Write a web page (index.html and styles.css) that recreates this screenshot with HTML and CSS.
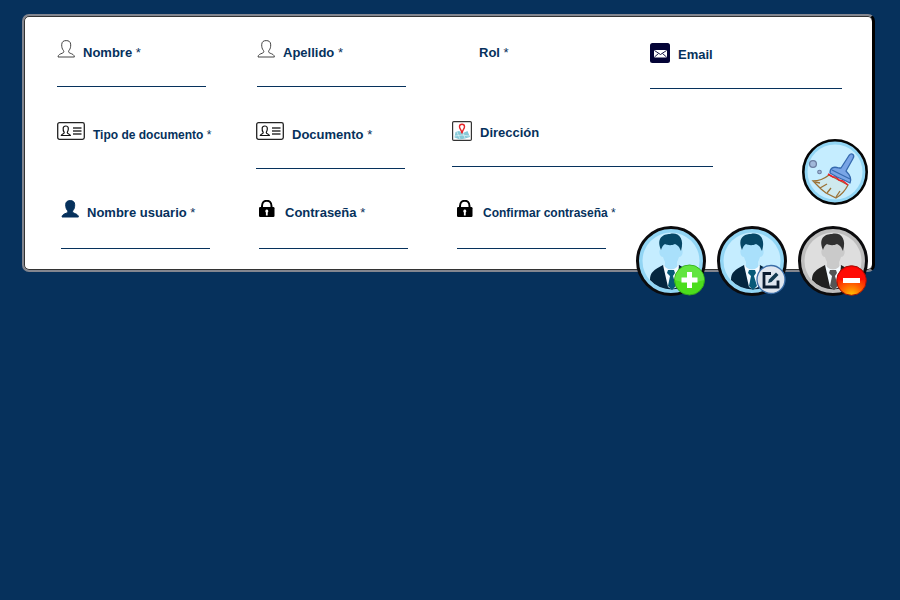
FILE: index.html
```html
<!DOCTYPE html>
<html lang="es">
<head>
<meta charset="utf-8">
<meta name="viewport" content="width=device-width, initial-scale=1">
<title>Usuarios</title>
<link rel="stylesheet" href="styles.css">
</head>
<body>
<svg class="defs" aria-hidden="true">
  <defs>
    <symbol id="person" viewBox="0 0 18 18">
      <path d="M1 17C1.200 14.500 3.300 14 5.300 13.200C6.900 12.600 7.200 11.600 6.400 10.400C5 8.900 4.700 6.800 4.700 4.800C4.700 1.600 6.700 .6 9.200 .6S13.700 1.600 13.700 4.800C13.700 6.800 13.400 8.900 12 10.400C11.200 11.600 11.500 12.600 13.100 13.200C15.100 14 17.200 14.500 17.400 17Z"/>
    </symbol>
    <symbol id="idcard" viewBox="0 0 28 18">
      <rect x=".7" y=".7" width="26.600" height="16.600" rx="1.800" fill="#fff" stroke="#222" stroke-width="1.300"/>
      <path d="M4.300 13.500C4.500 11.800 7.600 12.200 7.200 10.300C6.200 9 6 7.500 6.200 6C6.500 3.300 11 3.300 11.300 6C11.500 7.500 11.200 9 10.300 10.300C9.900 12.200 13.200 11.800 13.400 13.500Z" fill="none" stroke="#111" stroke-width="1.200"/>
      <path d="M16 6H24.500M16 9H24.500M16 12H24.500" stroke="#333" stroke-width="1.300"/>
    </symbol>
    <symbol id="lock" viewBox="0 0 18 18">
      <path d="M3 9V6C3 -1 12.500 -1 12.500 6V9" fill="none" stroke="#000" stroke-width="2"/>
      <rect x="0" y="7" width="15.500" height="10" rx="1.200" fill="#000"/>
      <path d="M7.800 9.500A1.700 1.700 0 0 1 8.700 12.500V15.500H6.900V12.500A1.700 1.700 0 0 1 7.800 9.500Z" fill="#fff"/>
    </symbol>
    <symbol id="bust" viewBox="0 0 70 70">
      <circle cx="35" cy="35" r="33.500" fill="var(--rim)" stroke="#0b0b0d" stroke-width="3"/>
      <circle cx="35" cy="35" r="28.500" fill="var(--face-bg)"/>
      <path d="M14 54C14 46 18 44 27 39L35 50L43 39C52 44 56 46 57 54A29 29 0 0 1 14 54Z" fill="var(--suit)"/>
      <path d="M27 39L31 42H39L43 39L41 61Q36 64 32 61Z" fill="#f4fbff"/>
      <path d="M32 44H38L39 47L37 50L40 60L36 64L32 60L34 50L31 47Z" fill="var(--tie)"/>
      <path d="M29 32H41V41Q35 46 29 41Z" fill="var(--skin)"/>
      <path d="M26 17H44V23Q48 23 46 29Q45 31 43 31Q41 39 35 39Q29 39 27 31Q25 31 24 29Q22 23 26 23Z" fill="var(--skin)"/>
      <path d="M25 24C20 12 27 8 34 8C42 6 49 12 45 25L43 21C42 20 41 19 39 18C35 20 31 19 29 18C27 19 26 21 25 24Z" fill="var(--hair)"/>
    </symbol>
  </defs>
</svg>

<main class="page">
  <form class="card">
    <div class="row row-personal">
      <div class="field">
        <label class="head" for="nombre"><svg class="icon outline"><use href="#person"/></svg><span>Nombre <i>*</i></span></label>
        <input class="line" id="nombre" type="text">
      </div>
      <div class="field">
        <label class="head" for="apellido"><svg class="icon outline"><use href="#person"/></svg><span>Apellido <i>*</i></span></label>
        <input class="line" id="apellido" type="text">
      </div>
      <div class="field">
        <label class="head no-icon" for="rol"><span>Rol <i>*</i></span></label>
        <select class="plain" id="rol"></select>
      </div>
      <div class="field low wide">
        <label class="head" for="email"><svg class="icon square" viewBox="0 0 20 20"><rect width="20" height="20" rx="2.500" fill="#030336"/><rect x="4" y="7" width="13" height="7.500" rx="1" fill="#fff"/><path d="M4.500 7.500L10.500 11.500L16.500 7.500M4.500 14L8.500 10.500M16.500 14L12.500 10.500" fill="none" stroke="#030336" stroke-width=".9"/></svg><span>Email</span></label>
        <input class="line" id="email" type="email">
      </div>
    </div>

    <div class="row row-address">
      <div class="field low">
        <label class="head small" for="tipo"><svg class="icon id"><use href="#idcard"/></svg><span>Tipo de documento <i>*</i></span></label>
        <select class="plain" id="tipo"></select>
      </div>
      <div class="field low">
        <label class="head" for="documento"><svg class="icon id"><use href="#idcard"/></svg><span>Documento <i>*</i></span></label>
        <input class="line" id="documento" type="text">
      </div>
      <div class="field wide">
        <label class="head" for="direccion"><svg class="icon square" viewBox="0 0 20 20"><rect x=".6" y=".6" width="18.800" height="18.800" rx="1.200" fill="#fff" stroke="#333" stroke-width="1.200"/><path d="M3.500 11L7 10L11 12L15.500 10L18 16L13 17.500L8 18.500L2.500 16.500Z" fill="#86c9d8"/><path d="M5 11L8 18M11 12L13 17M3 15L10 14L17 15" fill="none" stroke="#d7eff3" stroke-width=".8"/><path d="M10 12.500C9.700 9 7.500 8 7.500 5.700A2.500 2.500 0 0 1 12.500 5.700C12.500 8 10.300 9 10 12.500Z" fill="#fff" stroke="#e5262b" stroke-width="1.400"/></svg><span>Dirección</span></label>
        <input class="line" id="direccion" type="text">
      </div>
    </div>

    <div class="row row-account">
      <div class="field">
        <label class="head" for="usuario"><svg class="icon solid"><use href="#person"/></svg><span>Nombre usuario <i>*</i></span></label>
        <input class="line" id="usuario" type="text">
      </div>
      <div class="field">
        <label class="head" for="clave"><svg class="icon"><use href="#lock"/></svg><span>Contraseña <i>*</i></span></label>
        <input class="line" id="clave" type="password">
      </div>
      <div class="field">
        <label class="head small" for="clave2"><svg class="icon"><use href="#lock"/></svg><span>Confirmar contraseña <i>*</i></span></label>
        <input class="line" id="clave2" type="password">
      </div>
    </div>

    <div class="actions">
      <button class="round clear" type="reset" aria-label="Limpiar">
        <svg viewBox="0 0 66 66">
          <circle cx="33" cy="33" r="31.700" fill="#91d5f4" stroke="#050505" stroke-width="2.600"/>
          <circle cx="33" cy="33" r="27.500" fill="#c5edff"/>
          <path d="M27 36C22 40 17 42 11 42L17 48L19 50L24 54L34 59C41 55 44 50 46 46Z" fill="#cfe9ee" stroke="#9b7136" stroke-width="1.300"/>
          <path d="M18 49L25 45M25 54L29 49M34 58L38 52M13 43L18 44" fill="none" stroke="#9b7136" stroke-width="1.300"/>
          <path d="M26 35L31 38L34 38L37 41L41 42L46 46" fill="none" stroke="#ef1c2b" stroke-width="1.500"/>
          <path d="M28 34C28 29 31 27 37 29L39 29L47 16.500Q49 14 51 15.500Q52.500 17 51 19.500L44 32C48 36 50 40 48 44L42 41L35 38Z" fill="#79a5e6" stroke="#3569ae" stroke-width="1.300" stroke-linejoin="round"/>
          <path d="M30 31L48 40" stroke="#3569ae" stroke-width="1.100"/>
          <circle cx="11" cy="25" r="3.400" fill="#a1b8d9" stroke="#6b7da0" stroke-width="1.300"/>
          <circle cx="17.500" cy="33" r="1.800" fill="#a1b8d9" stroke="#6b7da0" stroke-width="1.100"/>
        </svg>
      </button>
      <div class="user-actions">
        <button class="round blue" type="button" aria-label="Agregar usuario">
          <svg viewBox="0 0 70 70"><use href="#bust"/><circle cx="53.500" cy="54" r="15" fill="#4cdd1c" stroke="#31a91b" stroke-width="1"/><path d="M39 54A14.500 14.500 0 0 1 68 54Q53 59 39 54Z" fill="#62e53f"/><path d="M51 46H56V51.500H61.500V56.500H56V62H51V56.500H45.500V51.500H51Z" fill="#fff"/></svg>
        </button>
        <button class="round blue" type="button" aria-label="Editar usuario">
          <svg viewBox="0 0 70 70"><use href="#bust"/><circle cx="54" cy="53.500" r="14" fill="#dfe6ef" stroke="#3b6ea8" stroke-width="1.300"/><path d="M54 47.500H47V61H61V54.500" fill="none" stroke="#0b1c30" stroke-width="2.800"/><path d="M51 57L52 53.500L59 46.500L61.500 49L54.500 56Z" fill="#123a50"/></svg>
        </button>
        <button class="round gray" type="button" aria-label="Eliminar usuario">
          <svg viewBox="0 0 70 70"><defs><radialGradient id="fire" cx=".5" cy="1" r=".8"><stop offset="0" stop-color="#ffc400"/><stop offset=".45" stop-color="#ff6500"/><stop offset="1" stop-color="#fa0000"/></radialGradient></defs><use href="#bust"/><circle cx="53.500" cy="54.500" r="14.800" fill="url(#fire)" stroke="#9e1208" stroke-width="1"/><path d="M39.500 53A14.200 14.200 0 0 1 67.500 53Q53 59 39.500 53Z" fill="#ff0b05"/><rect x="45" y="52" width="17" height="5" fill="#fff"/></svg>
        </button>
      </div>
    </div>
  </form>
</main>
</body>
</html>
```
FILE: styles.css
```css
* {
  box-sizing: border-box;
}

body {
  margin: 0;
  min-height: 100vh;
  background: #06315c;
  color: #06315c;
  font-family: "Liberation Sans", Arial, sans-serif;
  font-size: 13px;
}

.defs {
  position: absolute;
  width: 0;
  height: 0;
}

.page {
  padding: 14px 25px 24px 22px;
}

.card {
  position: relative;
  display: grid;
  gap: 31px;
  padding: 24px 30px 21px 33px;
  border: 2px solid #83868f;
  border-right: 3px solid #000;
  border-radius: 7px;
  background: #fff;
  box-shadow: inset 0 1px #333, inset 1px 0 #333, inset 0 -1px #333;
}

.row {
  display: grid;
  align-items: start;
}

.row-personal {
  grid-template-columns: 200fr 195fr 198fr 192fr;
}

.row-address {
  grid-template-columns: 199fr 196fr 261fr 129fr;
}

.row-account {
  grid-template-columns: 198fr 198fr 198fr 187fr;
  padding-left: 4px;
}

.field {
  min-width: 0;
}

.low {
  padding-top: 2px;
}

.head {
  display: flex;
  gap: 8px;
  height: 24px;
  font-weight: bold;
  line-height: 26px;
  white-space: nowrap;
}

.head i {
  font-style: normal;
  font-weight: normal;
}

.small {
  font-size: 12px;
}

.no-icon {
  padding-left: 27px;
}

.icon {
  flex: none;
  width: 18px;
  height: 18px;
}

.square {
  width: 20px;
  height: 20px;
  margin-top: 1px;
}

.id {
  width: 28px;
}

.outline {
  fill: #fff;
  stroke: #444;
}

.solid {
  fill: #06315c;
  stroke: #06315c;
}

.line,
.plain {
  display: block;
  width: 100%;
  max-width: 149px;
  height: 23px;
  padding: 0;
  border: 0;
  outline: 0;
  background: transparent;
  color: inherit;
  font: inherit;
  appearance: none;
}

.line {
  border-bottom: 1px solid #06315c;
}

.wide .line {
  max-width: none;
}

.row-account .line {
  height: 25px;
}

.actions {
  position: absolute;
  right: 4px;
  bottom: -26px;
  display: grid;
  gap: 21px;
  justify-items: end;
}

.user-actions {
  display: flex;
  gap: 11px;
}

.round {
  width: 70px;
  height: 70px;
  padding: 0;
  border: 0;
  border-radius: 50%;
  background: none;
  cursor: pointer;
}

.round svg {
  display: block;
  width: 100%;
  height: 100%;
}

.clear {
  width: 66px;
  height: 66px;
}

.blue {
  --rim: #91d5f4;
  --face-bg: #c5edff;
  --suit: #04263f;
  --tie: #075a78;
  --skin: #a9e0fb;
  --hair: #064766;
}

.gray {
  --rim: #bdbdbd;
  --face-bg: #dedede;
  --suit: #202020;
  --tie: #555;
  --skin: #cacaca;
  --hair: #303030;
}
```
